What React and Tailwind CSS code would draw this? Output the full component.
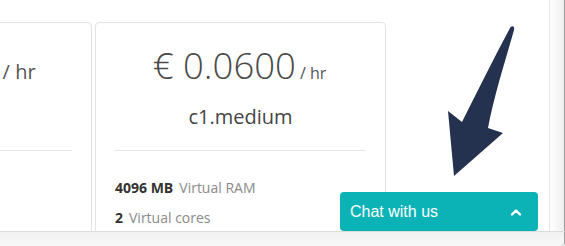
const PLANS = [
  { price: '0.0300', name: 'c1.small', ram: '2048', cores: '1', unit: 'text-[20px]' },
  { price: '0.0600', name: 'c1.medium', ram: '4096', cores: '2', unit: 'text-[16px]' },
]

function PlanCard({ plan }) {
  return (
    <div className="w-[291px] shrink-0 h-[240px] rounded-[4px] border border-[#e3e3e3] bg-white px-[19px]">
      <div className="flex items-baseline justify-center pt-[19px] pr-[2px] text-[#4a4a4a]">
        <span className="text-[36.5px] font-light leading-[46px]">€ {plan.price}</span>
        <span className={`ml-[4px] leading-none text-[#555] ${plan.unit}`}>/ hr</span>
      </div>
      <div className="mt-[15px] text-center text-[20px] leading-[28px] text-[#454545]">{plan.name}</div>
      <div className="mt-[19px] h-px bg-[#e6e6e6]" />
      <div className="mt-[28px] text-[14px] leading-[18px]">
        <span className="font-bold text-[#333]">{plan.ram} MB</span>
        <span className="ml-[6px] text-[#8a8a8a]">Virtual RAM</span>
      </div>
      <div className="mt-[12px] text-[14px] leading-[18px]">
        <span className="font-bold text-[#333]">{plan.cores}</span>
        <span className="ml-[6px] text-[#8a8a8a]">Virtual cores</span>
      </div>
    </div>
  )
}

function Arrow() {
  return (
    <svg className="absolute left-0 top-0 pointer-events-none" width="565" height="246" viewBox="0 0 565 246">
      <path
        d="M510 28 C512 25 515 26 514 30 C505 62 494 96 488 128 L503 133 L454 176 L448 111 L462 122 C478 90 494 58 510 28 Z"
        fill="#25324f"
      />
    </svg>
  )
}

export default function App() {
  return (
    <div className="relative w-[565px] h-[246px] overflow-hidden bg-white font-['Open_Sans',sans-serif]">
      <div className="flex h-[231px]">
        <div className="relative flex-1 overflow-hidden">
          <div className="flex gap-[3px] pt-[22px] ml-[-199px]">
            {PLANS.map((plan) => (
              <PlanCard key={plan.name} plan={plan} />
            ))}
          </div>
        </div>
        <div className="w-px bg-[#e4e4e4]" />
        <div className="w-[14px] bg-gradient-to-r from-white to-[#efefef]" />
        <div className="w-px bg-[#9a9a9a]" />
      </div>
      <div className="h-px bg-[#dcdcdc]" />
      <div className="h-[14px] bg-gradient-to-b from-[#f2f2f2] to-[#f7f7f7] border-r border-[#9a9a9a] rounded-br-[4px]" />

      <Arrow />

      <button className="absolute left-[340px] top-[192px] w-[198px] h-[39px] flex items-center justify-between rounded-[4px] bg-[#0cb3b6] pl-[10px] pr-[16px] text-white font-['Liberation_Sans',Arial,sans-serif]">
        <span className="text-[16px] leading-none">Chat with us</span>
        <svg width="12" height="8" viewBox="0 0 12 8" fill="none" stroke="white" strokeWidth="2.4" strokeLinecap="round" strokeLinejoin="round">
          <path d="M2 6.5 L6 2.5 L10 6.5" />
        </svg>
      </button>
    </div>
  )
}
